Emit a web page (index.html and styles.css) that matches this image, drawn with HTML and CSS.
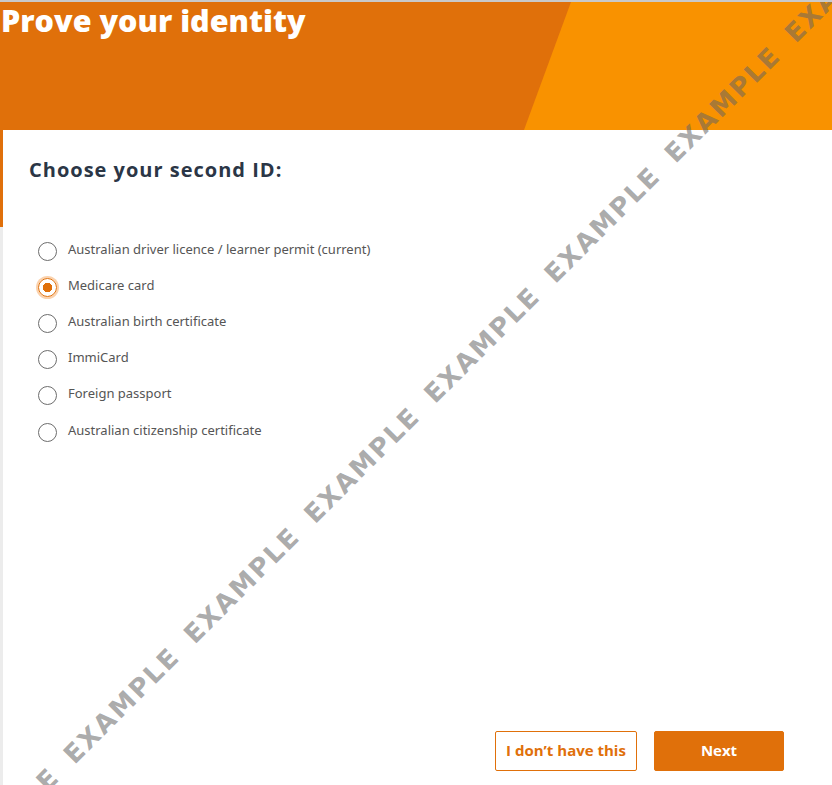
FILE: index.html
```html
<!DOCTYPE html>
<html lang="en">
<head>
  <meta charset="UTF-8" />
  <meta name="viewport" content="width=device-width, initial-scale=1.0"/>
  <title>Prove your identity</title>
  <link rel="stylesheet" href="styles.css">
</head>
<body>
  <div class="page">
    <header class="banner">
      <h1>Prove your identity</h1>
    </header>

    <main class="panel">
      <section class="intro">
        <h2>Choose your second ID:</h2>
      </section>

      <form class="id-form" id="secondIdForm">
        <ul class="options">
          <li><label class="option"><input type="radio" name="secondId" value="licence" /><span>Australian driver licence / learner permit (current)</span></label></li>
          <li><label class="option"><input type="radio" name="secondId" value="medicare" checked /><span>Medicare card</span></label></li>
          <li><label class="option"><input type="radio" name="secondId" value="birth" /><span>Australian birth certificate</span></label></li>
          <li><label class="option"><input type="radio" name="secondId" value="immicard" /><span>ImmiCard</span></label></li>
          <li><label class="option"><input type="radio" name="secondId" value="passport" /><span>Foreign passport</span></label></li>
          <li><label class="option"><input type="radio" name="secondId" value="citizenship" /><span>Australian citizenship certificate</span></label></li>
        </ul>

        <div class="actions">
          <button type="button" class="btn btn-outline">I don’t have this</button>
          <button type="submit" class="btn btn-primary">Next</button>
        </div>
      </form>
    </main>

    <div class="watermark" aria-hidden="true">
      <span>EXAMPLE</span><span>EXAMPLE</span><span>EXAMPLE</span><span>EXAMPLE</span><span>EXAMPLE</span><span>EXAMPLE</span><span>EXAMPLE</span><span>EXAMPLE</span><span>EXAMPLE</span>
    </div>
  </div>
</body>
</html>
```

FILE: styles.css
```css
* { box-sizing: border-box; }
html, body { margin: 0; padding: 0; }
body { font-family: "Open Sans", "Noto Sans", sans-serif; background-color: #fff; color: #333; overflow: hidden; }

.page { position: relative; overflow: hidden; height: 100vh; display: flex; flex-direction: column; border-top: 2px solid #c9c9c9; }

/* orange banner with the lighter slanted block on the right */
.banner { position: relative; height: 128px; flex-shrink: 0; background-color: #e0700a; padding-left: 1px; }
.banner::before { content: ""; position: absolute; inset: 0; background-color: #f99200; clip-path: polygon(571px 0, 100% 0, 100% 100%, 524px 100%); }
.banner h1 { position: relative; margin: 0; font-size: 30.5px; line-height: 36px; font-weight: 800; color: #fff; }

.panel { flex: 1; display: flex; flex-direction: column; border-left: 3px solid #ececec; }
.intro { margin-left: -3px; border-left: 3px solid #e0700a; height: 97px; padding: 28px 0 0 26px; }
.intro h2 { margin: 0; font-size: 20px; line-height: 24px; font-weight: 700; letter-spacing: 1px; color: #2b3646; }

.id-form { flex: 1; display: flex; flex-direction: column; }
.options { list-style: none; margin: 0; padding: 6px 0 0 35px; }
.options li { height: 36.2px; display: flex; align-items: center; }
.option { display: flex; align-items: center; gap: 11px; cursor: pointer; font-family: "Noto Sans", sans-serif; font-size: 13px; color: #555; }
.option span { padding-bottom: 5px; }

.option input { appearance: none; -webkit-appearance: none; margin: 0; width: 19px; height: 19px; border: 1.5px solid #6d6d6d; border-radius: 50%; background-color: #fff; flex-shrink: 0; }
.option input:checked { border-color: #e0700a; background: radial-gradient(circle, #e0700a 0 4.5px, #fff 5px); box-shadow: 0 0 0 2px #fbd2ad; }

.actions { margin-top: auto; display: flex; justify-content: flex-end; gap: 17px; padding: 0 48px 14px 0; }
.btn { height: 40px; border-radius: 2px; font-family: "Open Sans", sans-serif; font-size: 15px; font-weight: 700; padding: 0 0 3px; cursor: pointer; }
.btn-outline { width: 142px; background-color: #fff; color: #e0700a; border: 1px solid #e0700a; }
.btn-primary { width: 130px; background-color: #e0700a; color: #fff; border: 1px solid #e0700a; }

/* diagonal EXAMPLE stamp over the page */
.watermark { position: absolute; left: 362px; top: 463px; transform: translate(-50%, -50%) rotate(-45deg); display: flex; gap: 15px; pointer-events: none; white-space: nowrap; }
.watermark span { width: 155px; flex-shrink: 0; text-align: center; font-family: "DejaVu Sans", sans-serif; font-weight: 700; font-size: 26px; letter-spacing: 2px; color: rgba(100, 100, 100, 0.55); }
```
